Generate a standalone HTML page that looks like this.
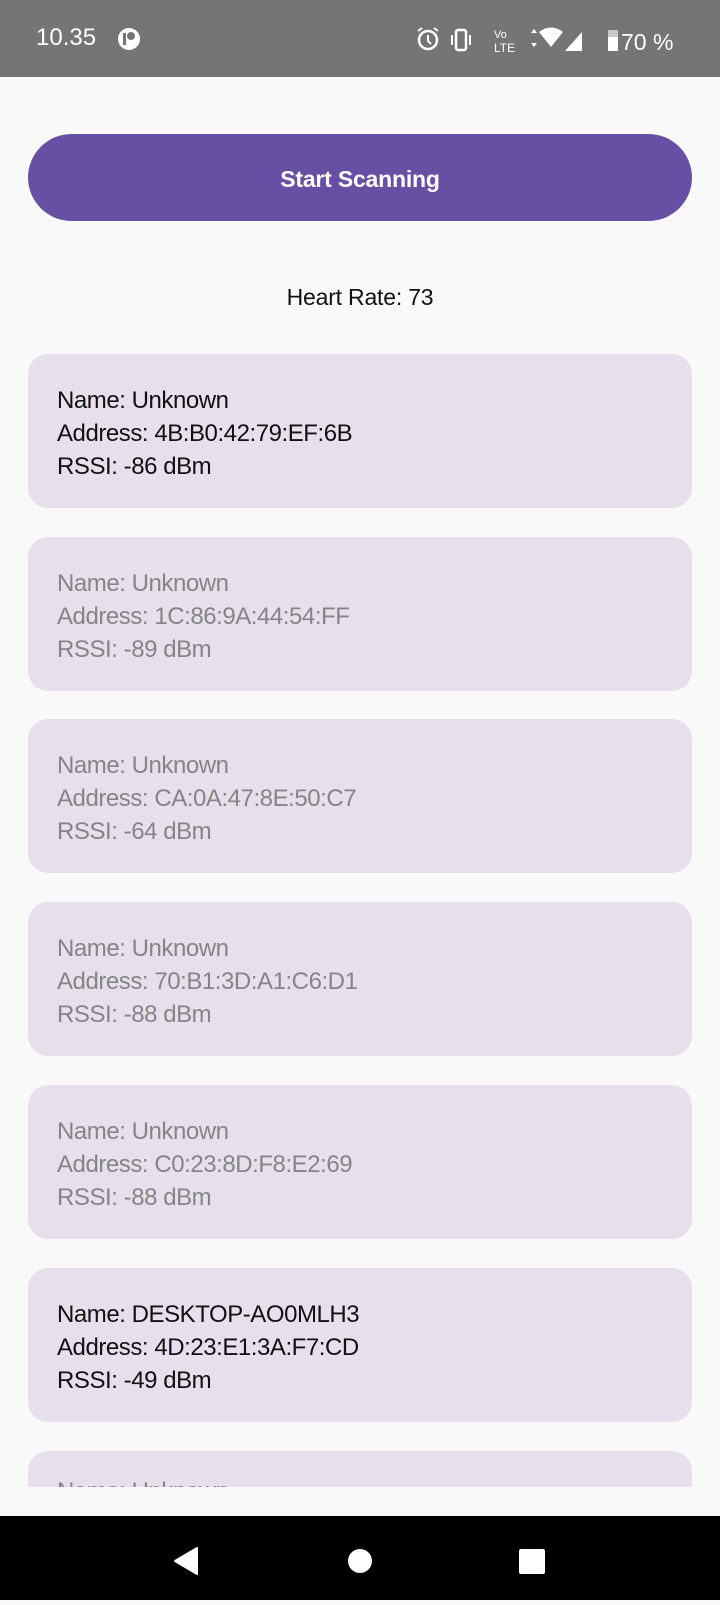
<!DOCTYPE html>
<html><head><style>
*{margin:0;padding:0;box-sizing:border-box}
body{width:720px;height:1600px;background:#f9f9f9;font-family:"Liberation Sans",sans-serif;position:relative;overflow:hidden}
.status{position:absolute;left:0;top:0;width:720px;height:77px;background:#757575;color:#fff}
.btn{position:absolute;left:28px;top:134px;width:664px;height:87px;border-radius:44px;background:#674fa4;color:#fff;font-size:23px;font-weight:bold;text-align:center;line-height:91px;letter-spacing:-0.2px}
.hr{position:absolute;top:284px;left:0;width:720px;text-align:center;font-size:23px;color:#111;letter-spacing:-0.2px}
.clip{position:absolute;top:0;left:0;width:720px;height:1487px;overflow:hidden}
.card{position:absolute;left:28px;width:664px;height:154px;border-radius:20px;background:#e7dfec;padding:30px 0 0 29px;font-size:24px;line-height:33px;color:#111;letter-spacing:-0.45px}
.g{color:#858585}
.nav{position:absolute;left:0;top:1516px;width:720px;height:84px;background:#000}
</style></head><body>
<div class="status">
<div style="position:absolute;left:36px;top:24px;font-size:24px;">10.35</div>
<div style="position:absolute;left:118px;top:28px;width:22px;height:22px;border-radius:50%;background:#fff"><div style="position:absolute;left:9px;top:4px;width:8px;height:8px;border-radius:50%;background:#757575"></div><div style="position:absolute;left:5px;top:5px;width:3px;height:12px;background:#757575"></div></div>
<svg style="position:absolute;left:414px;top:24px" width="270" height="32" viewBox="0 0 270 32">
<circle cx="14" cy="16" r="9" fill="none" stroke="#fff" stroke-width="2.5"/><path d="M14 11v6l3 3" stroke="#fff" stroke-width="2" fill="none"/><path d="M4 7l4-3M24 7l-4-3" stroke="#fff" stroke-width="2"/>
<rect x="42" y="6" width="10" height="20" rx="2" fill="none" stroke="#fff" stroke-width="2.5"/><path d="M38 11v10M56 11v10" stroke="#fff" stroke-width="2"/>
<text x="80" y="14" font-size="11" fill="#fff" font-family="Liberation Sans">Vo</text><text x="80" y="28" font-size="12" fill="#fff" font-family="Liberation Sans">LTE</text>
<path d="M117 9l3-4 3 4zM117 19l3 4 3-4z" fill="#fff"/>
<path d="M125 8q12-9 24 0l-12 15z" fill="#fff"/>
<path d="M151 27l17-19v19z" fill="#fff"/>
<rect x="194" y="6" width="10" height="21" fill="#fff" opacity=".6"/><rect x="194" y="13" width="10" height="14" fill="#fff"/>
<text x="207" y="26" font-size="23" fill="#fff" font-family="Liberation Sans">70 %</text>
</svg>
</div>
<div class="clip">
<div class="btn">Start Scanning</div>
<div class="hr">Heart Rate: 73</div>
<div class="card" style="top:354px">Name: Unknown<br>Address: 4B:B0:42:79:EF:6B<br>RSSI: -86 dBm</div>
<div class="card g" style="top:537px">Name: Unknown<br>Address: 1C:86:9A:44:54:FF<br>RSSI: -89 dBm</div>
<div class="card g" style="top:719px">Name: Unknown<br>Address: CA:0A:47:8E:50:C7<br>RSSI: -64 dBm</div>
<div class="card g" style="top:902px">Name: Unknown<br>Address: 70:B1:3D:A1:C6:D1<br>RSSI: -88 dBm</div>
<div class="card g" style="top:1085px">Name: Unknown<br>Address: C0:23:8D:F8:E2:69<br>RSSI: -88 dBm</div>
<div class="card" style="top:1268px">Name: DESKTOP-AO0MLH3<br>Address: 4D:23:E1:3A:F7:CD<br>RSSI: -49 dBm</div>
<div class="card g" style="top:1451px;padding-top:24px">Name: Unknown<br>Address: 00:00:00:00:00:00<br>RSSI: -90 dBm</div>
</div>
<div class="nav">
<svg width="720" height="84"><path d="M197 32v26l-22-13z" fill="#fff" stroke="#fff" stroke-width="2" stroke-linejoin="round"/><ellipse cx="360" cy="45" rx="12" ry="12" fill="#fff"/><rect x="519" y="33" width="26" height="25" rx="2" fill="#fff"/></svg>
</div>
</body></html>
